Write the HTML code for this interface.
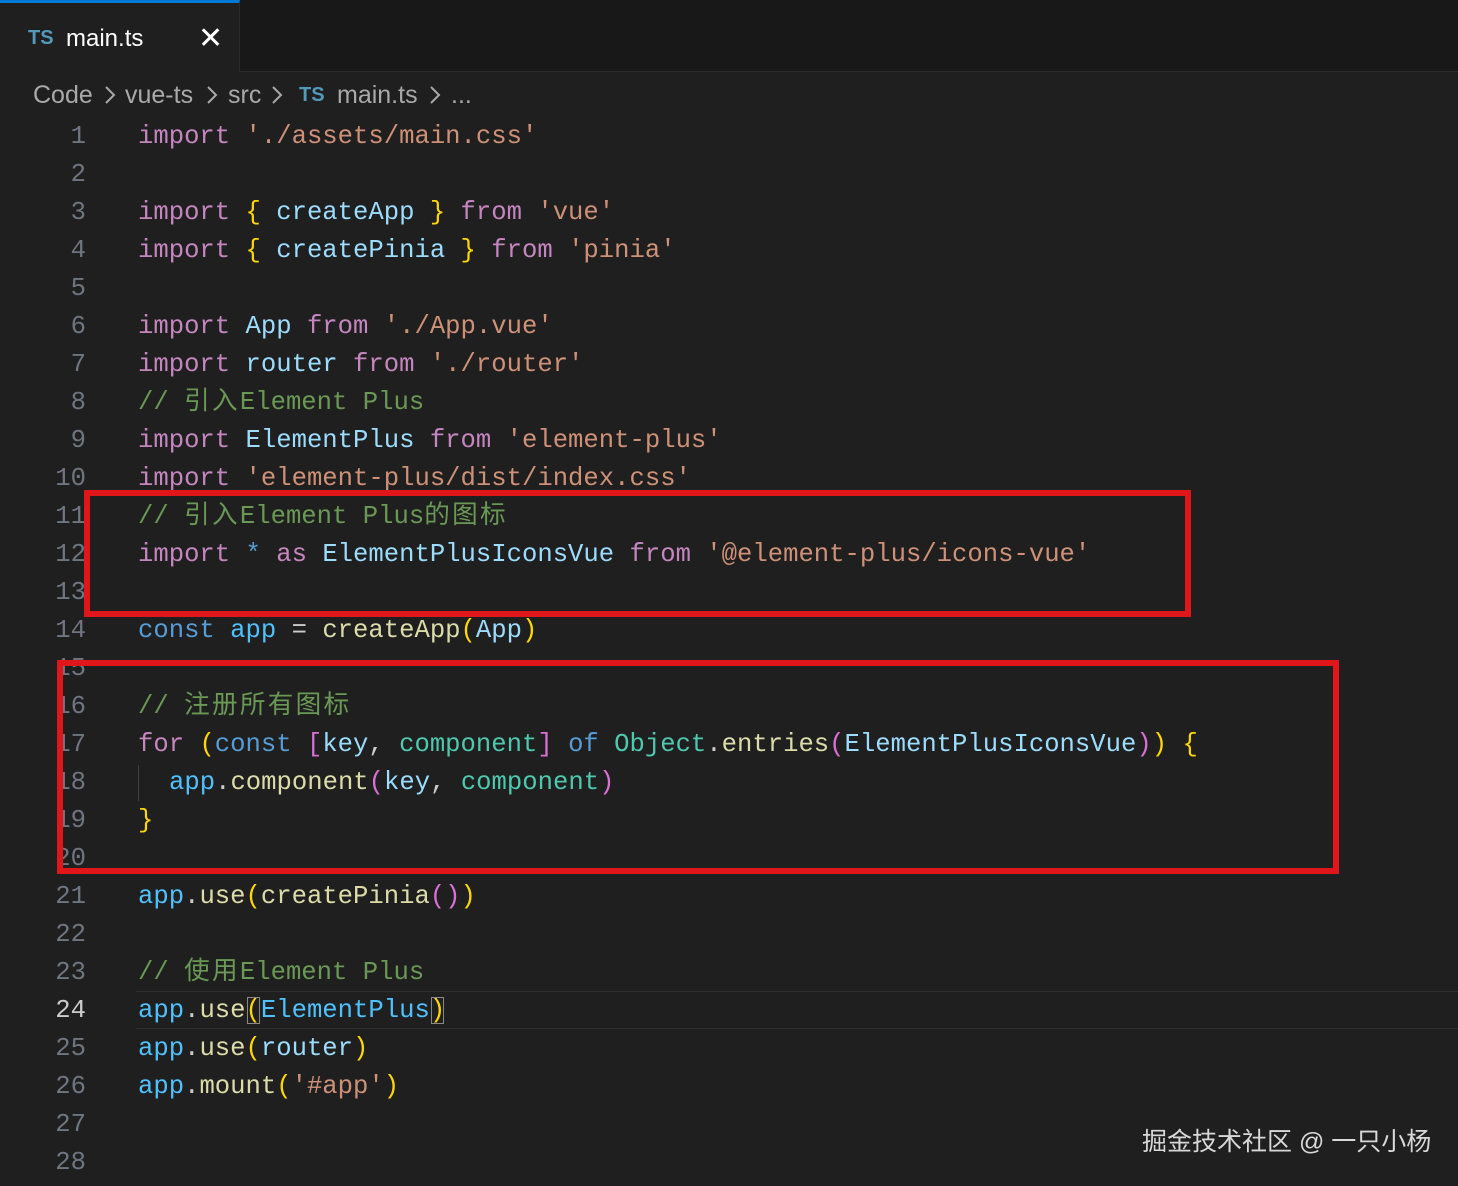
<!DOCTYPE html>
<html><head><meta charset="utf-8"><style>
*{margin:0;padding:0;box-sizing:border-box}
body{width:1458px;height:1184px;background:#1f1f1f;position:relative;overflow:hidden;font-family:"Liberation Mono","Noto Sans CJK SC",monospace}
.tabbar{position:absolute;left:0;top:0;width:1458px;height:72px;background:#181818;border-bottom:1px solid #2b2b2b}
.tab{position:absolute;left:0;top:0;width:240px;height:72px;background:#1f1f1f;border-top:3px solid #0078d4;border-right:1px solid #2b2b2b}
.ui{font-family:"Liberation Sans","Noto Sans CJK SC",sans-serif}
.ts{color:#519aba;font-weight:bold;font-family:"Liberation Sans",sans-serif}
.ln{position:absolute;left:0;width:86px;text-align:right;color:#6e7681;font-size:25.6px;line-height:38px;height:38px}
.cl{position:absolute;left:138px;font-size:25.6px;line-height:38px;height:38px;white-space:pre;color:#cccccc}
.k{color:#c586c0}.s{color:#ce9178}.b{color:#ffd700}.v{color:#9cdcfe}.f{color:#dcdcaa}.c{color:#6a9955}.d{color:#569cd6}.t{color:#4ec9b0}.a{color:#4fc1ff}.p{color:#da70d6}
.z{letter-spacing:2.3px}
.box{position:absolute;border:6px solid #e0161b}
.bc{position:absolute;top:81px;font-size:25px;color:#a9a9a9;white-space:pre}
.ch{position:absolute;top:84px}
</style></head><body>
<div class="tabbar"></div>
<div class="tab"></div>
<div class="ui" style="position:absolute;left:28px;top:27px;font-size:20px"><span class="ts">TS</span></div>
<div class="ui" style="position:absolute;left:66px;top:25px;font-size:24px;color:#fff">main.ts</div>
<div class="ui" style="position:absolute;left:198px;top:21px;font-size:30px;color:#fff">✕</div>

<div class="ui bc" style="left:33px">Code</div>
<svg class="ch" style="left:103px" width="14" height="22" viewBox="0 0 14 22"><path d="M3 3 L11 11 L3 19" fill="none" stroke="#a9a9a9" stroke-width="2"/></svg>
<div class="ui bc" style="left:125px">vue-ts</div>
<svg class="ch" style="left:205px" width="14" height="22" viewBox="0 0 14 22"><path d="M3 3 L11 11 L3 19" fill="none" stroke="#a9a9a9" stroke-width="2"/></svg>
<div class="ui bc" style="left:228px">src</div>
<svg class="ch" style="left:270px" width="14" height="22" viewBox="0 0 14 22"><path d="M3 3 L11 11 L3 19" fill="none" stroke="#a9a9a9" stroke-width="2"/></svg>
<div class="ui" style="position:absolute;left:299px;top:84px;font-size:20px"><span class="ts">TS</span></div>
<div class="ui bc" style="left:337px">main.ts</div>
<svg class="ch" style="left:428px" width="14" height="22" viewBox="0 0 14 22"><path d="M3 3 L11 11 L3 19" fill="none" stroke="#a9a9a9" stroke-width="2"/></svg>
<div class="ui bc" style="left:451px">...</div>

<div style="position:absolute;left:136px;top:991px;width:1322px;height:38px;border-top:1px solid #303030;border-bottom:1px solid #303030"></div>

<div style="position:absolute;left:0;top:2px;width:1458px;height:1184px">
<div class="ln" style="top:116px">1</div><div class="cl" style="top:116px"><span class="k">import</span> <span class="s">'./assets/main.css'</span></div>
<div class="ln" style="top:154px">2</div>
<div class="ln" style="top:192px">3</div><div class="cl" style="top:192px"><span class="k">import</span> <span class="b">{</span> <span class="v">createApp</span> <span class="b">}</span> <span class="k">from</span> <span class="s">'vue'</span></div>
<div class="ln" style="top:230px">4</div><div class="cl" style="top:230px"><span class="k">import</span> <span class="b">{</span> <span class="v">createPinia</span> <span class="b">}</span> <span class="k">from</span> <span class="s">'pinia'</span></div>
<div class="ln" style="top:268px">5</div>
<div class="ln" style="top:306px">6</div><div class="cl" style="top:306px"><span class="k">import</span> <span class="v">App</span> <span class="k">from</span> <span class="s">'./App.vue'</span></div>
<div class="ln" style="top:344px">7</div><div class="cl" style="top:344px"><span class="k">import</span> <span class="v">router</span> <span class="k">from</span> <span class="s">'./router'</span></div>
<div class="ln" style="top:382px">8</div><div class="cl c" style="top:382px">// <span class="z">引入</span>Element Plus</div>
<div class="ln" style="top:420px">9</div><div class="cl" style="top:420px"><span class="k">import</span> <span class="v">ElementPlus</span> <span class="k">from</span> <span class="s">'element-plus'</span></div>
<div class="ln" style="top:458px">10</div><div class="cl" style="top:458px"><span class="k">import</span> <span class="s">'element-plus/dist/index.css'</span></div>
<div class="ln" style="top:496px">11</div><div class="cl c" style="top:496px">// <span class="z">引入</span>Element Plus<span class="z">的图标</span></div>
<div class="ln" style="top:534px">12</div><div class="cl" style="top:534px"><span class="k">import</span> <span class="d">*</span> <span class="k">as</span> <span class="v">ElementPlusIconsVue</span> <span class="k">from</span> <span class="s">'@element-plus/icons-vue'</span></div>
<div class="ln" style="top:572px">13</div>
<div class="ln" style="top:610px">14</div><div class="cl" style="top:610px"><span class="d">const</span> <span class="a">app</span> = <span class="f">createApp</span><span class="b">(</span><span class="v">App</span><span class="b">)</span></div>
<div class="ln" style="top:648px">15</div>
<div class="ln" style="top:686px">16</div><div class="cl c" style="top:686px">// <span class="z">注册所有图标</span></div>
<div class="ln" style="top:724px">17</div><div class="cl" style="top:724px"><span class="k">for</span> <span class="b">(</span><span class="d">const</span> <span class="p">[</span><span class="v">key</span>, <span class="t">component</span><span class="p">]</span> <span class="d">of</span> <span class="t">Object</span>.<span class="f">entries</span><span class="p">(</span><span class="v">ElementPlusIconsVue</span><span class="p">)</span><span class="b">)</span> <span class="b">{</span></div>
<div class="ln" style="top:762px">18</div><div style="position:absolute;left:138px;top:763px;width:1px;height:36px;background:#404040"></div><div class="cl" style="top:762px;left:169px"><span class="a">app</span>.<span class="f">component</span><span class="p">(</span><span class="v">key</span>, <span class="t">component</span><span class="p">)</span></div>
<div class="ln" style="top:800px">19</div><div class="cl" style="top:800px"><span class="b">}</span></div>
<div class="ln" style="top:838px">20</div>
<div class="ln" style="top:876px">21</div><div class="cl" style="top:876px"><span class="a">app</span>.<span class="f">use</span><span class="b">(</span><span class="f">createPinia</span><span class="p">()</span><span class="b">)</span></div>
<div class="ln" style="top:914px">22</div>
<div class="ln" style="top:952px">23</div><div class="cl c" style="top:952px">// <span class="z">使用</span>Element Plus</div>
<div class="ln" style="top:990px;color:#cccccc">24</div><div class="cl" style="top:990px"><span class="a">app</span>.<span class="f">use</span><span class="b" style="outline:1px solid #888;outline-offset:-2px">(</span><span class="a">ElementPlus</span><span class="b" style="outline:1px solid #888;outline-offset:-2px">)</span></div>
<div class="ln" style="top:1028px">25</div><div class="cl" style="top:1028px"><span class="a">app</span>.<span class="f">use</span><span class="b">(</span><span class="v">router</span><span class="b">)</span></div>
<div class="ln" style="top:1066px">26</div><div class="cl" style="top:1066px"><span class="a">app</span>.<span class="f">mount</span><span class="b">(</span><span class="s">'#app'</span><span class="b">)</span></div>
<div class="ln" style="top:1104px">27</div>
<div class="ln" style="top:1142px">28</div>
</div>

<div class="box" style="left:84px;top:490px;width:1107px;height:127px"></div>
<div class="box" style="left:57px;top:660px;width:1282px;height:214px"></div>

<div class="ui" style="position:absolute;left:1142px;top:1122px;font-size:25px;color:#d8d8d8">掘金技术社区 @ 一只小杨</div>
</body></html>
